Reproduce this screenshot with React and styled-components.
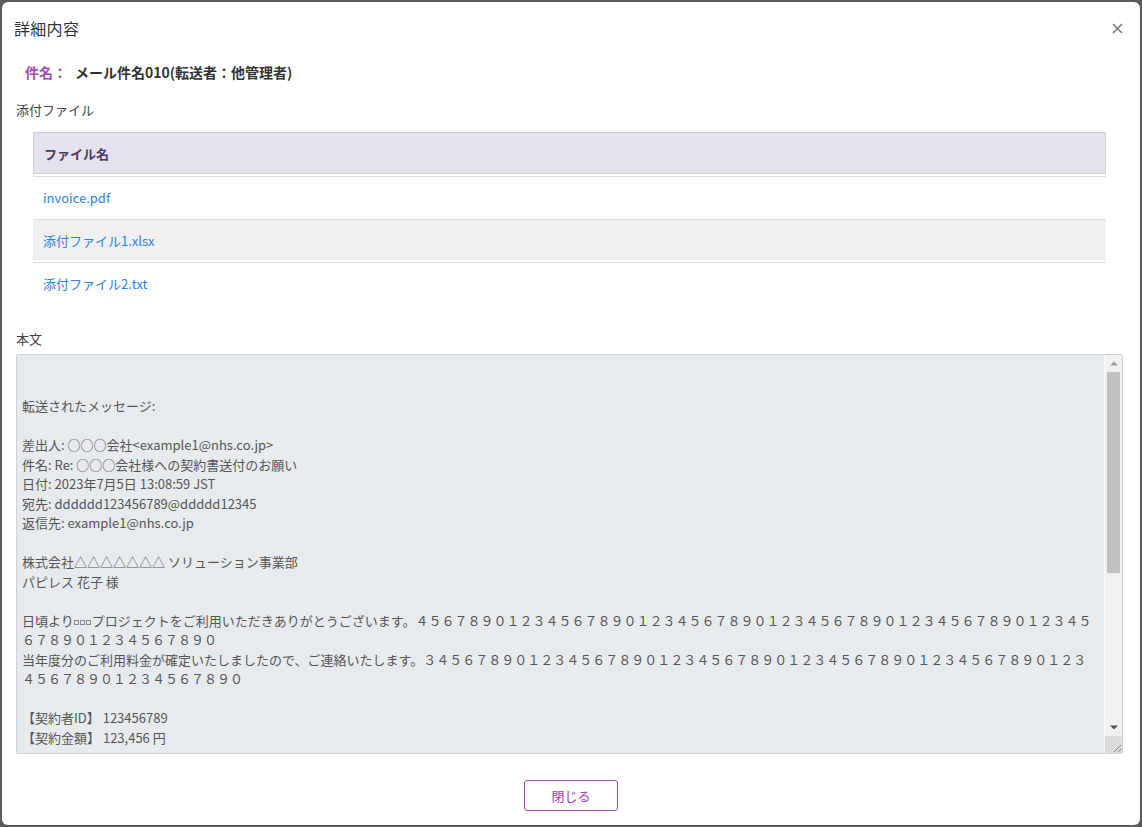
import React from "react";
import styled, { createGlobalStyle } from "styled-components";

const GlobalStyle = createGlobalStyle`
  html, body {
    margin: 0;
    padding: 0;
    background: #5b5b5b;
  }
  * {
    box-sizing: border-box;
  }
  body {
    font-family: "Noto Sans CJK JP", "Noto Sans", sans-serif;
    color: #333;
  }
`;

const fw = (s) => s.replace(/[0-9]/g, (d) => String.fromCharCode(d.charCodeAt(0) + 0xfee0));
const seq = (start, n) => start + "1234567890".repeat(n);

const headText = [
  "",
  "",
  "転送されたメッセージ:",
  "",
  "差出人: ○○○会社<example1@nhs.co.jp>",
  "件名: Re: ○○○会社様への契約書送付のお願い",
  "日付: 2023年7月5日 13:08:59 JST",
  "宛先: dddddd123456789@ddddd12345",
  "返信先: example1@nhs.co.jp",
  "",
  "株式会社△△△△△△△ ソリューション事業部",
  "パピレス 花子 様",
  "",
  "日頃より",
].join("\n");

const tailText = [
  "プロジェクトをご利用いただきありがとうございます。" + fw(seq("4567890", 6)),
  "当年度分のご利用料金が確定いたしましたので、ご連絡いたします。" + fw(seq("34567890", 6)),
  "",
  "【契約者ID】 123456789",
  "【契約金額】 123,456 円",
].join("\n");

const files = ["invoice.pdf", "添付ファイル1.xlsx", "添付ファイル2.txt"];

const Backdrop = styled.div`
  width: 1142px;
  height: 827px;
  padding: 2px;
  display: flex;
`;

const Modal = styled.div`
  flex: 1;
  background: #fff;
  border-radius: 6px;
  display: flex;
  flex-direction: column;
`;

const Header = styled.div`
  height: 52px;
  padding: 0 12px;
  display: flex;
  align-items: center;
  justify-content: space-between;
`;

const Title = styled.h2`
  margin: 0;
  font-size: 16px;
  font-weight: 400;
  color: #333;
  letter-spacing: 0.3px;
`;

const CloseButton = styled.button`
  border: none;
  background: none;
  padding: 0;
  width: 16px;
  height: 16px;
  display: flex;
  align-items: center;
  justify-content: center;
  margin-right: 3px;
  cursor: pointer;
`;

const Body = styled.div`
  padding: 0 17px 0 14px;
  display: flex;
  flex-direction: column;
`;

const SubjectRow = styled.div`
  margin: 6px 0 0 9px;
  height: 24px;
  display: flex;
  align-items: center;
  font-size: 14px;
  font-weight: 700;
`;

const SubjectLabel = styled.span`
  color: #a24bb2;
  margin-right: 8px;
`;

const SubjectValue = styled.span`
  color: #333;
`;

const SectionLabel = styled.div`
  font-size: 13px;
  color: #444;
  height: 20px;
  line-height: 20px;
  margin-top: ${(p) => p.$top}px;
`;

const FileTable = styled.div`
  margin: 12px 17px 0 17px;
  display: flex;
  flex-direction: column;
`;

const HeadRow = styled.div`
  height: 42px;
  background: #e4e2ec;
  border: 1px solid #cfd0d8;
  display: flex;
  align-items: center;
  padding: 0 10px;
  font-size: 13px;
  font-weight: 700;
  color: #4b3a5e;
`;

const FileRow = styled.div`
  height: 41px;
  margin-top: 2px;
  border-top: 1px solid #dedede;
  background: ${(p) => (p.$striped ? "#f0f0f0" : "#fff")};
  display: flex;
  align-items: center;
  padding: 0 10px;
`;

const FileLink = styled.a`
  font-size: 13px;
  color: #2a83e0;
  text-decoration: none;
  cursor: pointer;
`;

const MessageFrame = styled.div`
  margin-top: 5px;
  height: 400px;
  background: #e8ebee;
  border: 1px solid #cfd2d6;
  border-radius: 2px;
  display: flex;
  overflow: hidden;
`;

const MessageText = styled.div`
  flex: 1;
  padding: 2px 5px;
  font-size: 13px;
  line-height: 19.5px;
  color: #555;
  white-space: pre-wrap;
  word-break: break-all;
  overflow: hidden;
`;

const TinyBox = styled.span`
  display: inline-block;
  width: 5px;
  height: 5px;
  border: 1px solid #8a8a8a;
  margin: 0 1px 1px 0;
`;

const ScrollBar = styled.div`
  width: 18px;
  background: #f1f1f1;
  border-left: 1px solid #fafafa;
  display: flex;
  flex-direction: column;
`;

const ScrollButton = styled.div`
  height: 17px;
  display: flex;
  align-items: center;
  justify-content: center;
`;

const Track = styled.div`
  flex: 1;
  padding: 0 2px;
`;

const Thumb = styled.div`
  height: 201px;
  background: #c1c1c1;
`;

const Corner = styled.div`
  height: 17px;
  background: #dcdcdc;
  display: flex;
  align-items: flex-end;
  justify-content: flex-end;
`;

const Footer = styled.div`
  display: flex;
  justify-content: center;
  margin-top: 26px;
`;

const CloseAction = styled.button`
  width: 94px;
  height: 31px;
  background: #fff;
  border: 1px solid #a84bb8;
  border-radius: 3px;
  color: #a040b0;
  font-family: "Noto Sans CJK JP", "Noto Sans", sans-serif;
  font-size: 13px;
  cursor: pointer;
`;

export default function App() {
  return (
    <>
      <GlobalStyle />
      <Backdrop>
        <Modal>
          <Header>
            <Title>詳細内容</Title>
            <CloseButton aria-label="close">
              <svg width="11" height="11" viewBox="0 0 11 11">
                <path d="M1 1 L10 10 M10 1 L1 10" stroke="#777" strokeWidth="1.6" />
              </svg>
            </CloseButton>
          </Header>
          <Body>
            <SubjectRow>
              <SubjectLabel>件名：</SubjectLabel>
              <SubjectValue>メール件名010(転送者：他管理者)</SubjectValue>
            </SubjectRow>
            <SectionLabel $top={16}>添付ファイル</SectionLabel>
            <FileTable>
              <HeadRow>ファイル名</HeadRow>
              {files.map((f, i) => (
                <FileRow key={f} $striped={i % 2 === 1}>
                  <FileLink>{f}</FileLink>
                </FileRow>
              ))}
            </FileTable>
            <SectionLabel $top={26}>本文</SectionLabel>
            <MessageFrame>
              <MessageText>
                {headText}
                <TinyBox />
                <TinyBox />
                <TinyBox />
                {tailText}
              </MessageText>
              <ScrollBar>
                <ScrollButton>
                  <svg width="8" height="5" viewBox="0 0 8 5">
                    <path d="M0 4.5 L4 0.5 L8 4.5 Z" fill="#a3a3a3" />
                  </svg>
                </ScrollButton>
                <Track>
                  <Thumb />
                </Track>
                <ScrollButton>
                  <svg width="8" height="5" viewBox="0 0 8 5">
                    <path d="M0 0.5 L4 4.5 L8 0.5 Z" fill="#505050" />
                  </svg>
                </ScrollButton>
                <Corner>
                  <svg width="12" height="12" viewBox="0 0 12 12">
                    <path d="M11 4 L4 11 M11 8 L8 11" stroke="#8a8a8a" strokeWidth="1" />
                  </svg>
                </Corner>
              </ScrollBar>
            </MessageFrame>
          </Body>
          <Footer>
            <CloseAction>閉じる</CloseAction>
          </Footer>
        </Modal>
      </Backdrop>
    </>
  );
}
